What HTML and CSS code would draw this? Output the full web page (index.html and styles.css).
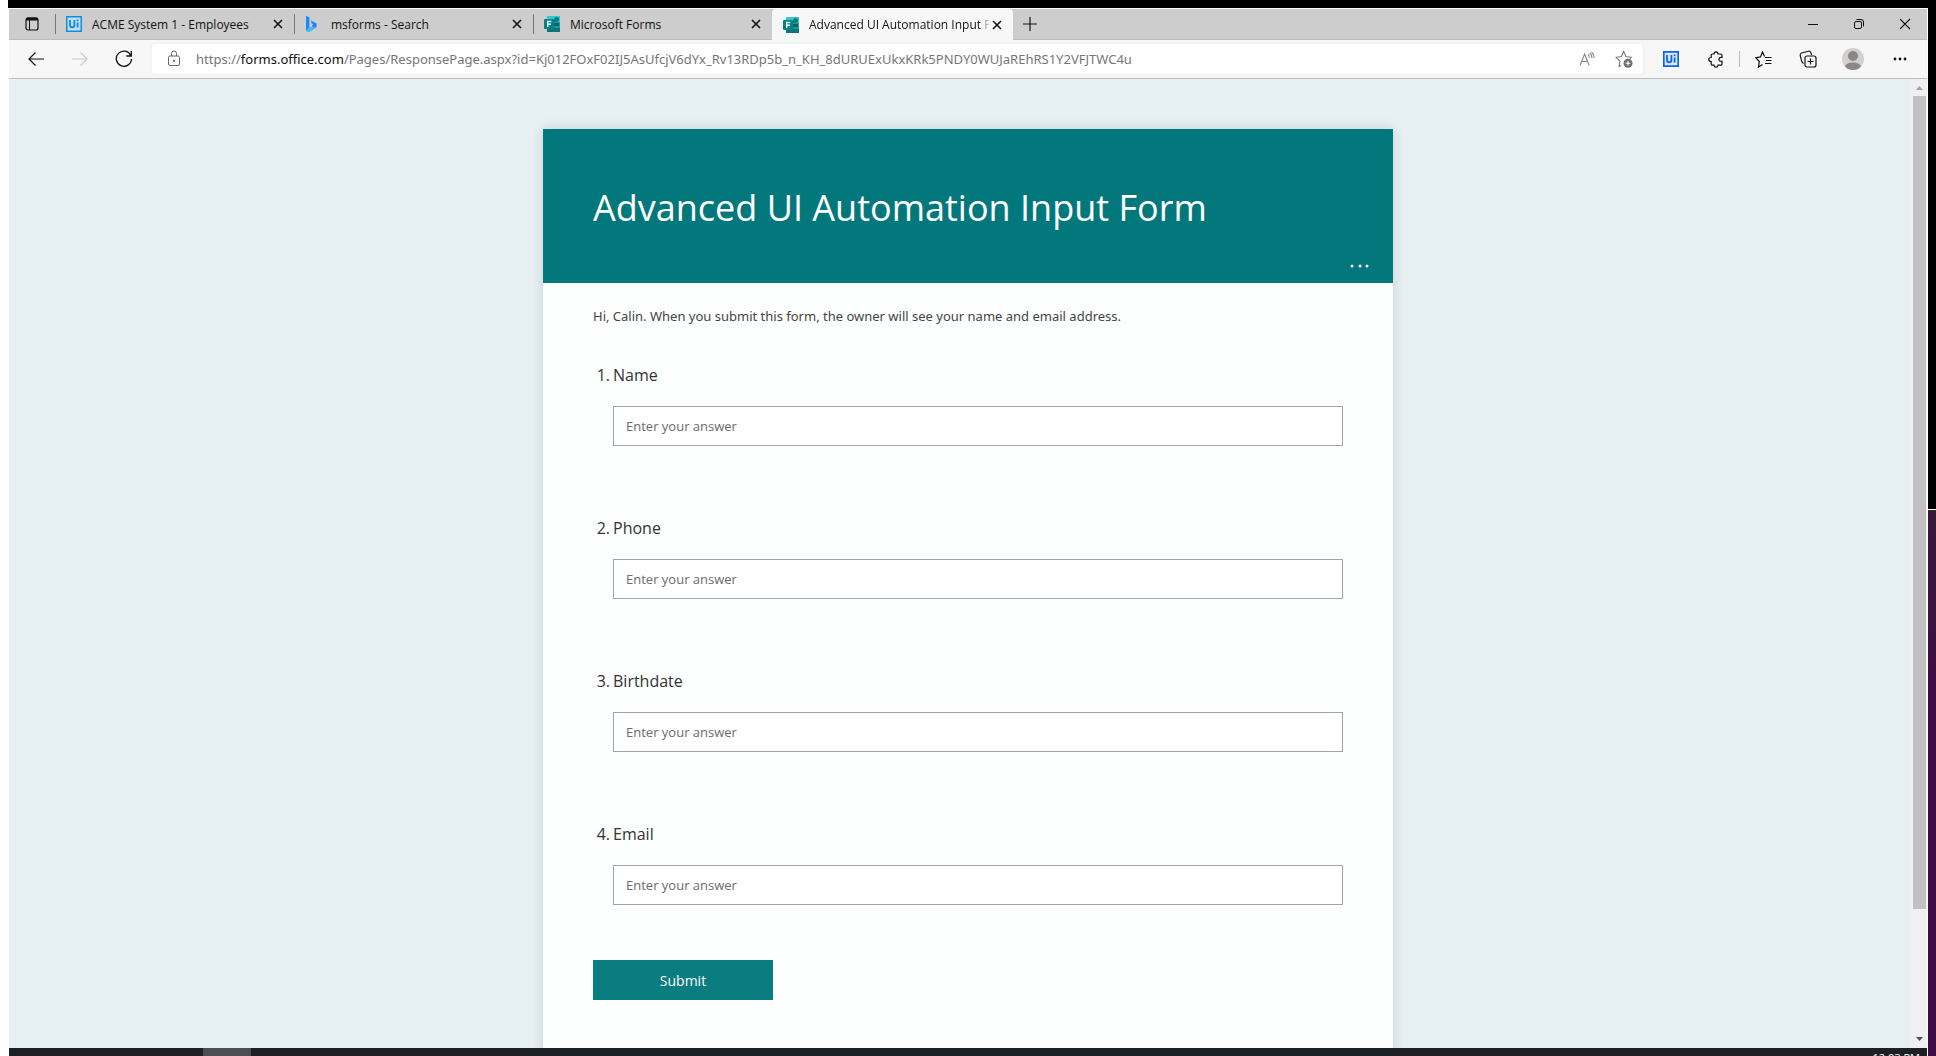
FILE: index.html
```html
<!DOCTYPE html>
<html lang="en">
<head>
<meta charset="utf-8">
<title>Advanced UI Automation Input Form</title>
<link rel="stylesheet" href="styles.css">
</head>
<body>
<svg class="defs" aria-hidden="true">
  <symbol id="close" viewBox="0 0 10 10"><path d="M1 1l8 8M9 1L1 9" fill="none" stroke="#111" stroke-width="1.6"/></symbol>
  <symbol id="forms" viewBox="0 0 16 16">
    <path d="M3 0h13v6H3z" fill="#37c6d0"/><path d="M3 4h8v8H3z" fill="#05686d"/>
    <path d="M10 6h6v5h-6z" fill="#1a9ba1"/><path d="M3 11h13v5H3z" fill="#0f7378"/><path d="M10 7h5v3h-5z" fill="#0b6367"/><path d="M11 10h5v2h-5z" fill="#1a9ba1"/>
    <circle cx="12.500" cy="3.500" r="2.500" fill="#0b7c82"/>
    <rect x="0" y="3" width="10" height="10" rx="1" fill="#038387"/>
    <path d="M3.700 11V5.500h3.600M3.700 8.200h3.200" fill="none" stroke="#fff" stroke-width="1.400"/>
  </symbol>
</svg>
<div class="desktop">
  <div class="window">
    <nav class="tabs" aria-label="Tabs">
      <button class="tab-actions" aria-label="Tab actions"><svg width="14" height="14" viewBox="0 0 14 14"><rect x="1" y="1" width="12" height="12" rx="2" fill="none" stroke="#111" stroke-width="1.200"/><path d="M1 3.500V2q0-1.500 1.500-1.500h9Q13 .5 13 2v1.500z" fill="#111"/><path d="M4.500 3v10" stroke="#111"/></svg></button>
      <div class="tab">
        <svg class="favicon" viewBox="0 0 16 16"><path d="M.75.750h14.500v14.500H.750z" fill="#c3dcec" stroke="#0a8fe0" stroke-width="1.500"/><path d="M4 4v5q0 2.300 2.200 2.300T8.400 9V4M11.600 6.500v5M11.600 3.500v1.700" fill="none" stroke="#0a8fe0" stroke-width="1.800"/></svg>
        <span class="tab-title">ACME System 1 - Employees</span>
        <button class="close" aria-label="Close tab"><svg><use href="#close"/></svg></button>
      </div>
      <div class="tab">
        <svg class="favicon" viewBox="0 0 16 16"><defs><linearGradient id="bg" x2="1" y2="1"><stop stop-color="#2aa7f5"/><stop offset="1" stop-color="#1f63f0"/></linearGradient></defs><g transform="translate(1)"><path d="M0 0l3.400 1.300v10.200L0 15z" fill="#168df2"/><path d="M4.600 4.300l6 3.200v3.600L3 16l-3-1.500 5.800-3.800L7 8.500l-1.300-.8z" fill="url(#bg)"/><path d="M0 14.500L5.800 11l4.800-.5L3.400 15.800Q1.200 16.300 0 14.500z" fill="#35c3f3"/></g></svg>
        <span class="tab-title">msforms - Search</span>
        <button class="close" aria-label="Close tab"><svg><use href="#close"/></svg></button>
      </div>
      <div class="tab">
        <svg class="favicon"><use href="#forms"/></svg>
        <span class="tab-title">Microsoft Forms</span>
        <button class="close" aria-label="Close tab"><svg><use href="#close"/></svg></button>
      </div>
      <div class="tab active">
        <svg class="favicon"><use href="#forms"/></svg>
        <span class="tab-title">Advanced UI Automation Input Form</span>
        <button class="close" aria-label="Close tab"><svg><use href="#close"/></svg></button>
      </div>
      <button class="new-tab" aria-label="New tab"><svg width="14" height="14" viewBox="0 0 14 14"><path d="M7 0v14M0 7h14" stroke="#111" stroke-width="1.200"/></svg></button>
      <div class="controls">
        <button aria-label="Minimize"><svg width="12" height="12" viewBox="0 0 12 12"><path d="M1 6.500h10" stroke="#111"/></svg></button>
        <button aria-label="Restore"><svg width="12" height="12" viewBox="0 0 12 12" fill="none" stroke="#111"><rect x="1.500" y="3.500" width="7" height="7" rx="1.500"/><path d="M3.500 1.500H8q2.500 0 2.500 2.500v4.500"/></svg></button>
        <button aria-label="Close"><svg width="12" height="12" viewBox="0 0 12 12"><path d="M1 1l10 10M11 1L1 11" stroke="#111" stroke-width="1.100"/></svg></button>
      </div>
    </nav>
    <div class="toolbar">
      <button class="nav-button" aria-label="Back"><svg width="16" height="14" viewBox="0 0 16 14"><path d="M7.500 0.500L1 7l6.500 6.500M1 7h15" fill="none" stroke="#111" stroke-width="1.200"/></svg></button>
      <button class="nav-button" aria-label="Forward"><svg width="16" height="14" viewBox="0 0 16 14"><path d="M8.500 0.500L15 7l-6.500 6.500M15 7H0" fill="none" stroke="#ccc" stroke-width="1.200"/></svg></button>
      <button class="nav-button" aria-label="Refresh"><svg width="18" height="18" viewBox="0 0 18 18"><path d="M15.800 5.500A7.600 7.600 0 1 0 16.500 9M16.300 1v5h-5" fill="none" stroke="#111" stroke-width="1.300"/></svg></button>
      <div class="address">
        <svg width="14" height="18" viewBox="0 0 14 18" fill="none" stroke="#666"><rect x="1.500" y="6" width="11" height="9.500" rx="1.500"/><path d="M4.500 6V3.500Q4.500 1 7 1t2.500 2.500V6"/><circle cx="7" cy="10.800" r=".8" fill="#666"/></svg>
        <div class="url">https://<b>forms.office.com</b>/Pages/ResponsePage.aspx?id=Kj012FOxF02IJ5AsUfcjV6dYx_Rv13RDp5b_n_KH_8dURUExUkxKRk5PNDY0WUJaREhRS1Y2VFJTWC4u</div>
        <button aria-label="Read aloud"><svg width="16" height="16" viewBox="0 0 16 16" fill="none" stroke="#888" stroke-width="1.100"><path d="M1 14.500L5.600 3l4.600 11.500M2.600 10.500h6M9 3.500q1.600 1.300 1.300 3.200M10.800 2q2.400 2 2 5M12.500 1q3 2.500 2.500 6"/></svg></button>
        <button aria-label="Add favourite"><svg width="18" height="18" viewBox="0 0 18 18"><path d="M6 15.500l-1.800 1 .7-5.500L1 7.300l5.300-.8L8.700 1.500 11 6.500l5.300.8-1.500 1.500" fill="none" stroke="#777" stroke-width="1.100"/><circle cx="13" cy="13.300" r="4.500" fill="#707070"/><path d="M13 11v4.600M10.700 13.300h4.600" stroke="#fff" stroke-width="1.100"/></svg></button>
      </div>
      <button class="extension" aria-label="UiPath"><svg width="16" height="16" viewBox="0 0 16 16"><path d="M.75.750h14.500v14.500H.750z" fill="#d8e8fb" stroke="#0b63e5" stroke-width="1.800"/><path d="M4 4v5q0 2.300 2.200 2.300T8.400 9V4M11.600 6.500v5M11.600 3.500v1.700" fill="none" stroke="#0b63e5" stroke-width="1.800"/></svg></button>
      <button class="extensions" aria-label="Extensions"><svg width="16" height="17" viewBox="0 0 16 17"><path d="M4.500 3h1.500Q6.200.8 8 .8T10 3h2.700q1.300 0 1.300 1.300V6.500q-3-.3-3 1.900t3 1.900v2.600q0 1.300-1.300 1.300H10q-.2 2-2 2t-2-2H4.500q-1.300 0-1.300-1.300v-2.300Q.8 10.500.8 8.500t2.400-2V4.300Q3.200 3 4.500 3z" fill="none" stroke="#111" stroke-width="1.200"/></svg></button>
      <span class="divider"></span>
      <button class="favourites" aria-label="Favourites"><svg width="18" height="17" viewBox="0 0 18 17"><path d="M10 6.500h6.500M11 9.500h5.500M10 12.500h6.500M7.500 13.500l-4 2.500.8-5.500L.8 6.700l4.700-.8L7.500 1l2 4.500" fill="none" stroke="#111" stroke-width="1.200"/></svg></button>
      <button class="collections" aria-label="Collections"><svg width="18" height="18" viewBox="0 0 18 18"><path d="M4.500 13.500Q3 12.500 2.500 10.500L1.200 5.500Q.8 3.600 2.500 3l7-1.800q1.700-.4 2.300 1.200l.8 2.600" fill="none" stroke="#111" stroke-width="1.100"/><rect x="6" y="6" width="11" height="11" rx="2" fill="#f7f7f7" stroke="#111" stroke-width="1.200"/><path d="M11.500 8.500v6M8.500 11.500h6" stroke="#111" stroke-width="1.200"/></svg></button>
      <button class="profile" aria-label="Profile"><svg width="22" height="22" viewBox="0 0 22 22"><defs><clipPath id="disc"><circle cx="11" cy="11" r="11"/></clipPath></defs><circle cx="11" cy="11" r="11" fill="#d2d0ce"/><g fill="#8a8886" clip-path="url(#disc)"><circle cx="11" cy="8" r="5"/><ellipse cx="11" cy="19" rx="8" ry="4.500"/></g></svg></button>
      <button class="more" aria-label="Settings and more"><svg width="14" height="4" viewBox="0 0 14 4" fill="#111"><circle cx="2" cy="2" r="1.400"/><circle cx="7" cy="2" r="1.400"/><circle cx="12" cy="2" r="1.400"/></svg></button>
    </div>
    <div class="viewport">
      <main class="page">
        <form class="card">
          <header class="banner">
            <h1>Advanced UI Automation Input Form</h1>
            <button type="button" class="banner-more" aria-label="More options"><svg width="20" height="4" viewBox="0 0 20 4" fill="#fff"><circle cx="2" cy="2" r="1.500"/><circle cx="10" cy="2" r="1.500"/><circle cx="17" cy="2" r="1.500"/></svg></button>
          </header>
          <div class="body">
            <p class="intro">Hi, Calin. When you submit this form, the owner will see your name and email address.</p>
            <div class="question"><span class="number">1.</span><label for="q1">Name</label><input id="q1" type="text" placeholder="Enter your answer"></div>
            <div class="question"><span class="number">2.</span><label for="q2">Phone</label><input id="q2" type="text" placeholder="Enter your answer"></div>
            <div class="question"><span class="number">3.</span><label for="q3">Birthdate</label><input id="q3" type="text" placeholder="Enter your answer"></div>
            <div class="question"><span class="number">4.</span><label for="q4">Email</label><input id="q4" type="text" placeholder="Enter your answer"></div>
            <button type="submit" class="submit">Submit</button>
          </div>
        </form>
      </main>
      <div class="scrollbar">
        <svg width="7" height="4" viewBox="0 0 7 4"><path d="M0 4l3.500-4L7 4z" fill="#a3a3a3"/></svg>
        <div class="track"><div class="thumb"></div></div>
        <svg width="7" height="4" viewBox="0 0 7 4"><path d="M0 0l3.500 4L7 0z" fill="#505050"/></svg>
      </div>
    </div>
  </div>
  <div class="taskbar"><span class="task"></span><time class="clock">12:03 PM</time></div>
  <div class="side"></div>
</div>
</body>
</html>
```
FILE: styles.css
```css
* { box-sizing: border-box; }
body { margin: 0; background: #fff; font-family: "Open Sans", "Noto Sans", sans-serif; }
button { display: flex; align-items: center; justify-content: center; padding: 0; border: 0; background: none; font: inherit; flex: none; }
svg { display: block; flex: none; }
.defs { position: absolute; width: 0; height: 0; }
.desktop {
  height: 100vh; overflow: hidden; padding-left: 8px; border-top: 8px solid #000;
  background: #fff;
  display: grid; grid-template: minmax(0, 1fr) 8px / minmax(0, 1fr) 8px;
  border-image: linear-gradient(90deg, #fff 8px, #000 8px) 8 0 0 0;
}
.window { padding: 1px 1px 0; display: flex; flex-direction: column; min-width: 0; }
.side { grid-area: 1 / 2 / 3 / 3; background: linear-gradient(#000 501px, #fff 501px, #fff 502px, #371a38 502px, #3d0c45 70%); }

.tabs { display: flex; height: 31px; background: #cdcdcd; border-bottom: 1px solid #bdbdbd; font-size: 12px; color: #111; }
.tab-actions { width: 46px; }
.tab { width: 239px; display: flex; align-items: center; padding: 0 9px 0 11px; position: relative; }
.tab::before { content: ""; position: absolute; left: 0; top: 5px; bottom: 5px; width: 1px; background: #777; }
.tab.active { width: 241px; height: 31px; background: #f7f7f7; border-radius: 4px 4px 0 0; }
.tab.active::before { display: none; }
.favicon { width: 16px; height: 16px; margin-right: 10px; }
.tab-title { flex: 1; overflow: hidden; white-space: nowrap; }
.active .tab-title { mask-image: linear-gradient(90deg, #000 calc(100% - 10px), transparent); }
.close { width: 14px; height: 14px; }
.close svg { width: 10px; height: 10px; }
.new-tab { width: 34px; }
.controls { margin-left: auto; display: flex; }
.controls button { width: 46px; }
.controls { margin-right: -1px; }

.toolbar { display: flex; align-items: center; height: 39px; background: #f7f7f7; border-bottom: 1px solid #bdbdbd; padding-left: 5px; }
.nav-button { width: 44px; height: 30px; }
.address { flex: 1; min-width: 0; height: 30px; margin-left: 6px; background: #fff; border-radius: 4px; box-shadow: 0 0 3px #e4e4e4; display: flex; align-items: center; padding: 0 10px 0 15px; gap: 20px; }
.url { flex: 1; min-width: 0; margin-left: -5px; overflow: hidden; white-space: nowrap; font: 13px "Noto Sans", sans-serif; color: #767676; }
.url b { font-weight: 400; color: #111; }
.extension { width: 56px; }
.extensions { width: 34px; }
.divider { width: 1px; height: 16px; background: #bbb; margin-left: 6px; }
.favourites { width: 48px; }
.collections { width: 40px; }
.profile { width: 50px; }
.more { width: 44px; margin-right: 5px; }

.viewport { flex: 1; min-height: 0; display: flex; background: #e7f0f3; }
.page { flex: 1; min-width: 0; overflow: hidden; padding: 50px 0 0 16px; display: flex; }
.card { width: 850px; margin: 0 auto; background: #fdfefe; box-shadow: 0 0 12px rgba(0, 30, 30, .14); min-height: 100%; height: max-content; }
.banner { height: 154px; background: #03787c; padding: 51px 23px 13px 50px; display: flex; flex-direction: column; justify-content: space-between; color: #fff; }
h1 { margin: 0; font-size: 36px; line-height: 56px; font-weight: 400; white-space: nowrap; }
.banner-more { align-self: flex-end; height: 8px; }
.body { padding: 22px 50px 80px; }
.intro { margin: 0 0 36px; font: 13px/22px "Noto Sans", sans-serif; color: #444; }
.question { display: grid; grid-template-columns: 20px minmax(0, 1fr); row-gap: 19px; margin-bottom: 70px; font-size: 16px; line-height: 24px; color: #333; }
.question:last-of-type { margin-bottom: 55px; }
.number { text-align: right; padding-right: 3px; white-space: nowrap; }
.question input { grid-column: 2; height: 40px; border: 1px solid #a0a5a5; border-radius: 0; background: #fff; padding: 0 12px; font: 13px "Open Sans", sans-serif; }
.question input::placeholder { color: #6b6b6b; }
.submit { width: 180px; height: 40px; background: #0b7c80; color: #fff; font-size: 14px; }

.scrollbar { width: 16px; background: #f0f0f0; display: flex; flex-direction: column; align-items: center; justify-content: space-between; padding: 7px 0; }
.track { flex: 1; width: 13px; margin: 6px 0; }
.thumb { height: 87%; background: #c1c1c1; }

.taskbar { background: #1c2126; display: flex; justify-content: flex-end; overflow: hidden; margin: 0 1px; }
.task { width: 48px; margin: 0 auto 0 194px; background: #4b4e52; }
.clock { color: #fff; font-size: 11px; line-height: 20px; margin-right: 7px; }
```
